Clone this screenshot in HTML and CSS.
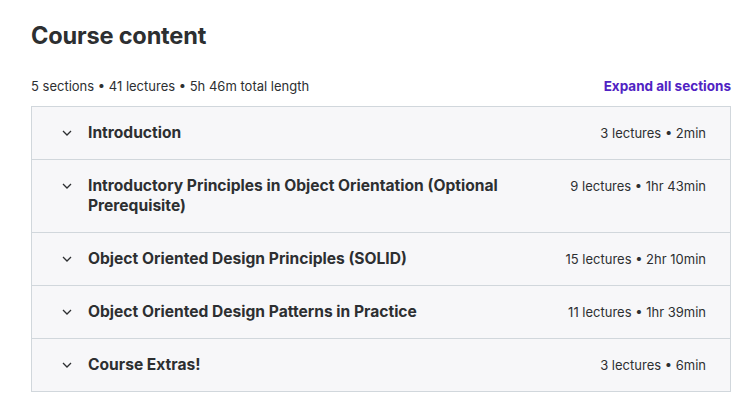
FILE: index.html
```html
<!DOCTYPE html>
<html>
<head>
<meta charset="utf-8">
<link rel="stylesheet" href="styles.css">
</head>
<body>
<div class="page">
  <h2 class="heading">Course content</h2>
  <div class="summary">
    <span class="stats">5 sections • 41 lectures • 5h 46m total length</span>
    <button class="expand">Expand all sections</button>
  </div>
  <div class="panel">
    <div class="row">
      <svg class="chev" viewBox="0 0 10 6"><path d="M1 1l4 4 4-4" /></svg>
      <span class="title">Introduction</span>
      <span class="meta">3 lectures • 2min</span>
    </div>
    <div class="row">
      <svg class="chev" viewBox="0 0 10 6"><path d="M1 1l4 4 4-4" /></svg>
      <span class="title">Introductory Principles in Object Orientation (Optional Prerequisite)</span>
      <span class="meta">9 lectures • 1hr 43min</span>
    </div>
    <div class="row">
      <svg class="chev" viewBox="0 0 10 6"><path d="M1 1l4 4 4-4" /></svg>
      <span class="title">Object Oriented Design Principles (SOLID)</span>
      <span class="meta">15 lectures • 2hr 10min</span>
    </div>
    <div class="row">
      <svg class="chev" viewBox="0 0 10 6"><path d="M1 1l4 4 4-4" /></svg>
      <span class="title">Object Oriented Design Patterns in Practice</span>
      <span class="meta">11 lectures • 1hr 39min</span>
    </div>
    <div class="row">
      <svg class="chev" viewBox="0 0 10 6"><path d="M1 1l4 4 4-4" /></svg>
      <span class="title">Course Extras!</span>
      <span class="meta">3 lectures • 6min</span>
    </div>
  </div>
</div>
</body>
</html>
```
FILE: styles.css
```css
html, body {
  margin: 0;
  padding: 0;
  background: #fff;
}
body {
  font-family: Inter, "Noto Sans", sans-serif;
  color: #2d2f31;
}
.page {
  padding: 20px 24px 0 31px;
  width: 700px;
}
.heading {
  margin: 0;
  font-size: 23.6px;
  font-weight: 700;
  line-height: 32px;
  letter-spacing: -0.2px;
  color: #2d2f31;
}
.summary {
  display: flex;
  justify-content: space-between;
  align-items: center;
  margin-top: 22px;
  height: 24px;
  margin-bottom: 8px;
}
.stats {
  font-size: 13px;
  color: #2d2f31;
}
.expand {
  border: 0;
  background: none;
  padding: 0;
  font-family: inherit;
  font-size: 13.5px;
  font-weight: 700;
  color: #5022c3;
}
.panel {
  border: 1px solid #d1d7dc;
  border-top: 0;
}
.row {
  display: flex;
  align-items: flex-start;
  border-top: 1px solid #d1d7dc;
  background: #f7f7f9;
  padding: 16px 24px 16px 30px;
}
.chev {
  width: 10px;
  height: 6px;
  margin-top: 7px;
  flex: none;
  fill: none;
  stroke: #2d2f31;
  stroke-width: 1.3;
}
.title {
  flex: 1;
  margin-left: 16px;
  font-size: 15.6px;
  font-weight: 700;
  line-height: 20px;
  margin-right: 60px;
}
.meta {
  flex: none;
  font-size: 13px;
  line-height: 20px;
  color: #2d2f31;
}
```
